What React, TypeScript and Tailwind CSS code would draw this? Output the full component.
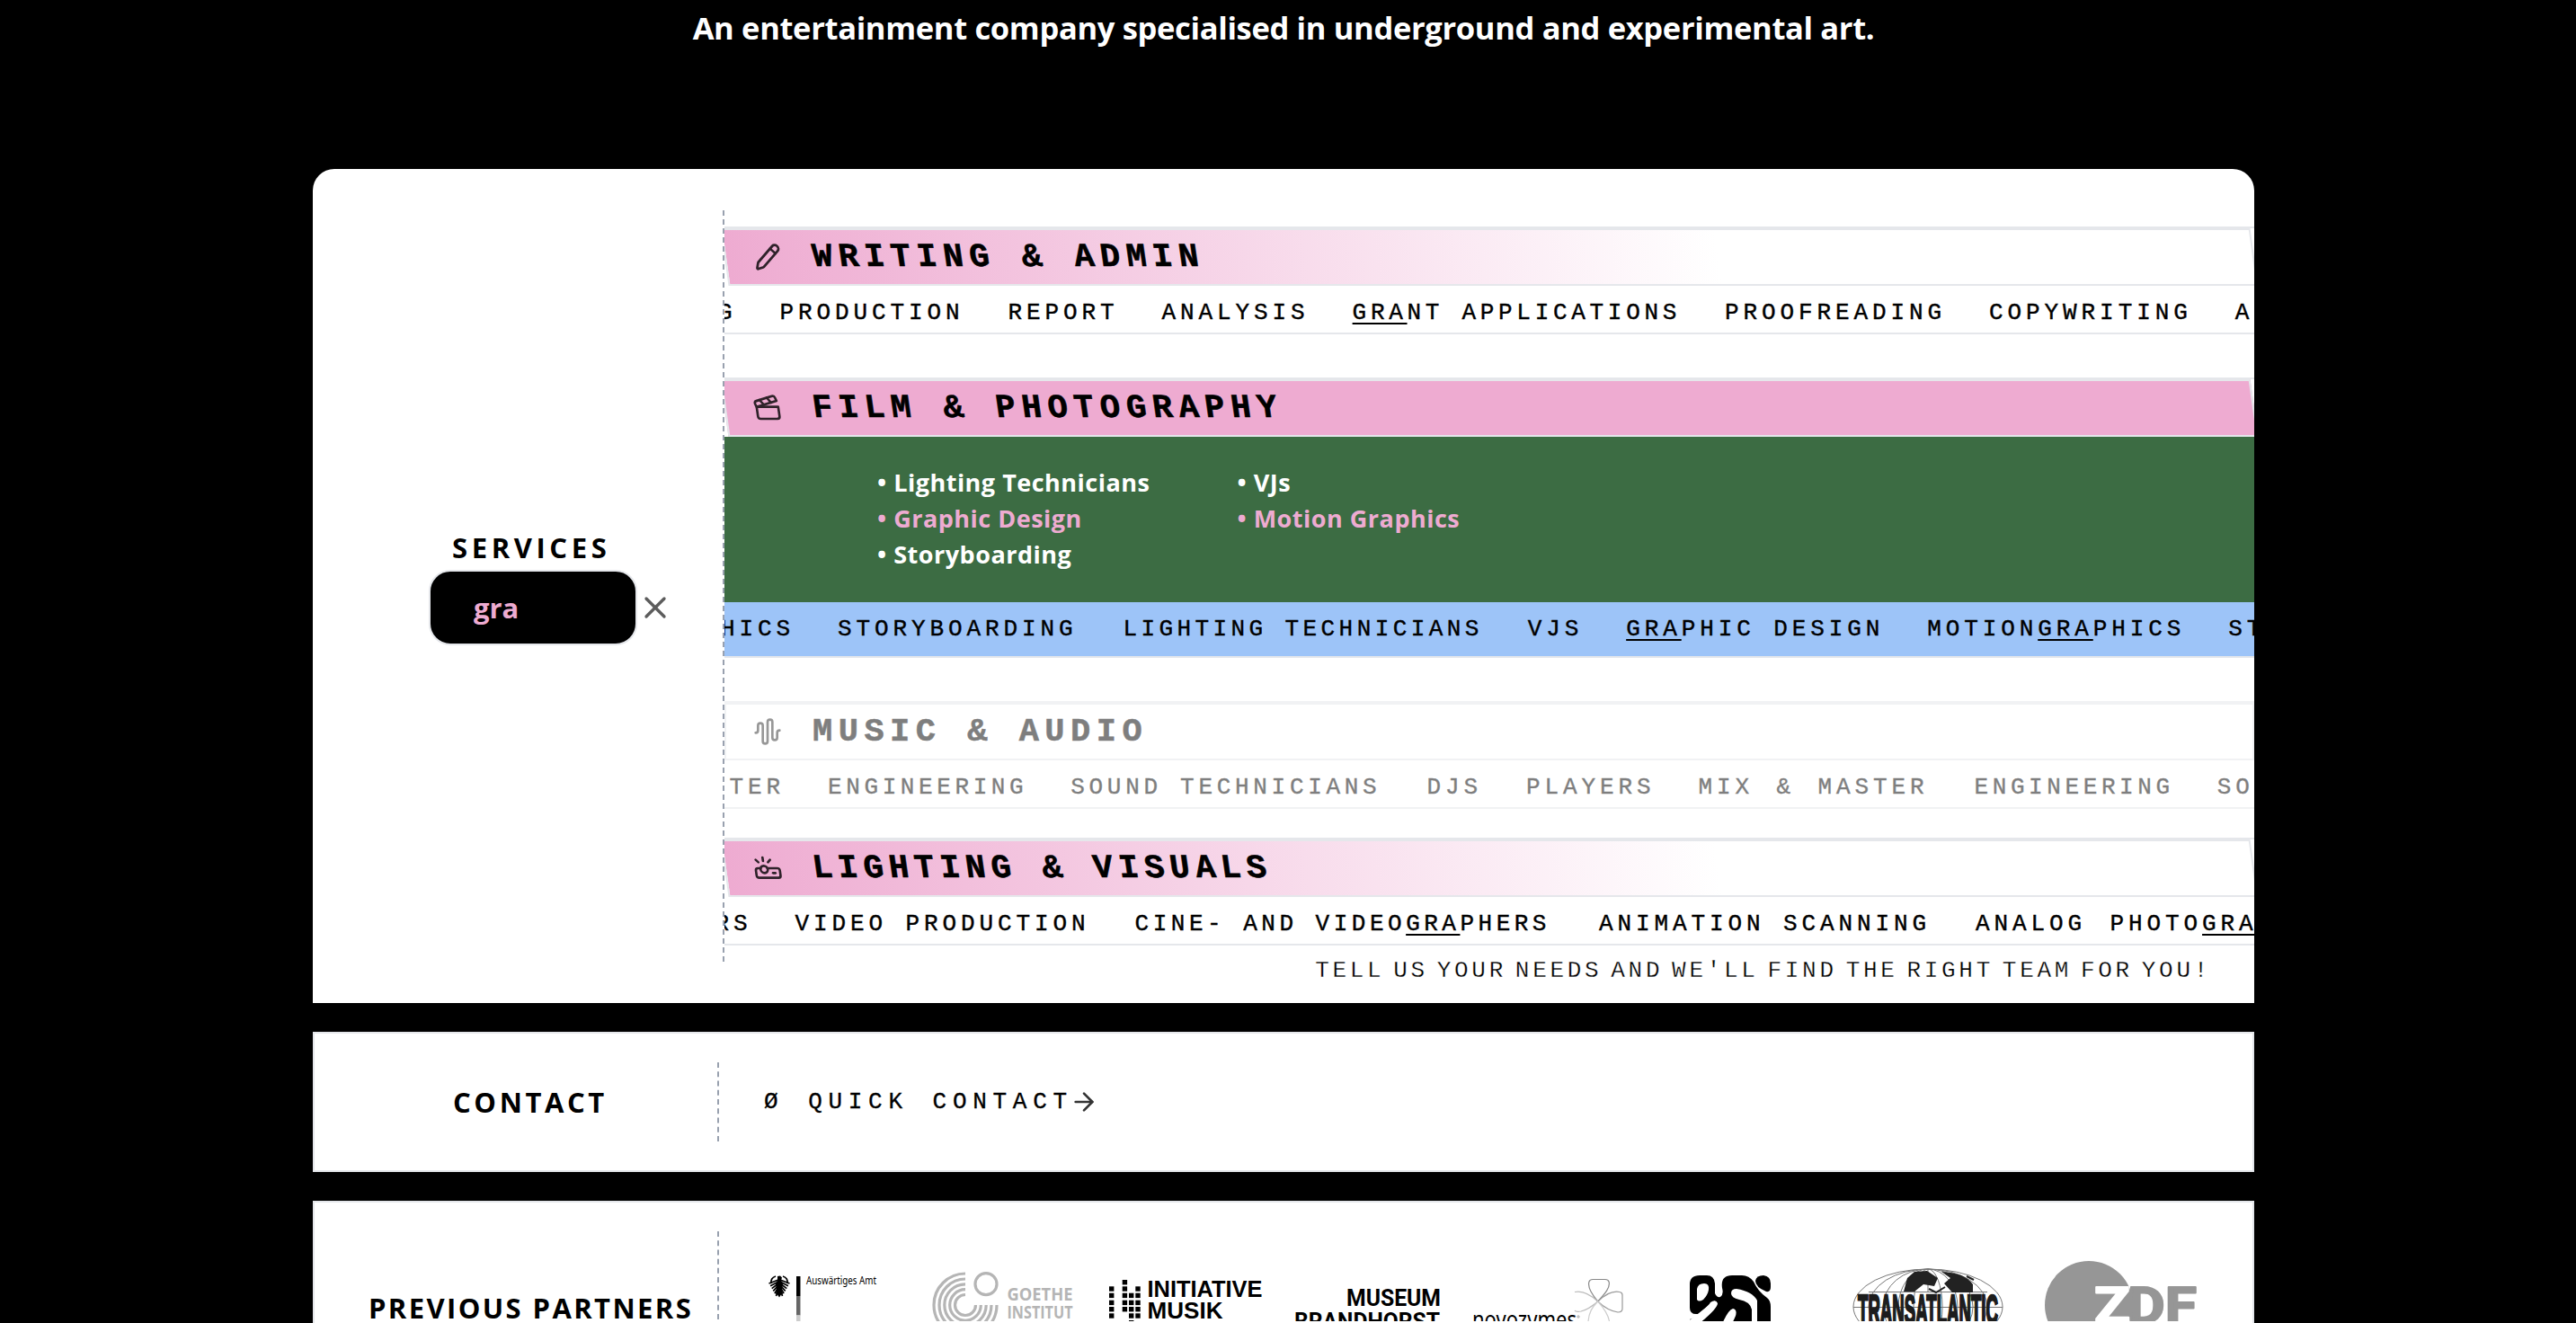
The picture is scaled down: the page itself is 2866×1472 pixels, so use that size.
import React from "react";
import { ArrowRight, AudioWaveform, Clapperboard, Pencil, Projector, X, type LucideIcon } from "lucide-react";

const MONO = "font-['Liberation_Mono',monospace]";

type Item = { text: string; className?: string };

/** Underlines every occurrence of the search query inside a ticker word. */
function Marked({ text }: { text: string }) {
  const parts = text.split("GRA");
  return (
    <>
      {parts.map((part, i) => (
        <React.Fragment key={i}>
          {i > 0 && (
            <span className="underline decoration-2 underline-offset-[4px] [text-decoration-skip-ink:none]">GRA</span>
          )}
          {part}
        </React.Fragment>
      ))}
    </>
  );
}

function Ticker({ items, className }: { items: Item[]; className: string }) {
  return (
    <div className={`flex items-center overflow-hidden border-b-2 border-gray-200 ${className}`}>
      <div
        className={`flex shrink-0 gap-[48px] whitespace-pre text-[26px] leading-[32px] tracking-[4.9px] [-webkit-text-stroke:0.4px_black] ${MONO}`}
      >
        {items.map((item, i) => (
          <span key={i} className={item.className}>
            <Marked text={item.text} />
          </span>
        ))}
      </div>
    </div>
  );
}

function Heading({
  icon: Icon,
  title,
  className,
  titleClass = "tracking-[6.9px]",
}: {
  icon: LucideIcon;
  title: string;
  className: string;
  titleClass?: string;
}) {
  return (
    <div className="overflow-hidden border-t-2 border-gray-200">
      <div className={`flex h-[64px] items-center border-2 border-gray-200 pl-[30px] ${className}`}>
        <Icon size={32} strokeWidth={2} className="opacity-80" />
        <h3
          className={`ml-[34px] whitespace-pre text-[37px] leading-none font-bold [-webkit-text-stroke:0.6px_black] ${titleClass} ${MONO}`}
        >
          {title}
        </h3>
      </div>
    </div>
  );
}

function Logo({ x, width, children }: { x: number; width: number; children: React.ReactNode }) {
  return (
    <svg width={width} height={82} viewBox={`${x} 1390 ${width} 82`} className="shrink-0">
      {children}
    </svg>
  );
}

const squares: [number, number[]][] = [
  [1234, [1433.3, 1440.7, 1448.7, 1456, 1463.3]],
  [1248.7, [1426, 1433.3, 1440.7, 1448.7, 1456]],
  [1256, [1440.7, 1448.7, 1456, 1463.3, 1471]],
  [1263.3, [1433.3, 1440.7, 1448.7, 1456, 1463.3]],
];

function Partners() {
  return (
    <div className="flex pt-[18px] pl-[50px]">
      <Logo x={850} width={180}>
        <g stroke="#000" strokeWidth="1.7" fill="none">
          {[0, 1, 2, 3, 4, 5].map((i) => (
            <path
              key={i}
              d={`M866 ${1426 + i * 2} L${855.5 + i * 1.6} ${1430 + i * 2.8} M868 ${1426 + i * 2} L${878.5 - i * 1.6} ${1430 + i * 2.8}`}
            />
          ))}
          <path d="M858 1430q-1-6 5-8M876 1430q1-6-5-8" />
        </g>
        <path d="M865 1422l3-.5 2 2-1 3 2 4-1 6 1 5-2 1-2 3-2-3-2-1 1-5-1-6 2-4z" />
        <rect x="886" y="1422" width="4.5" height="22" />
        <rect x="886" y="1444" width="4.5" height="21.5" fill="#666" />
        <rect x="886" y="1465.5" width="4.5" height="10" fill="#ccc" />
        <text x="897" y="1431.3" fontFamily="Noto Sans, sans-serif" fontSize="12.5" textLength="78" lengthAdjust="spacingAndGlyphs">
          Auswärtiges Amt
        </text>
      </Logo>
      <Logo x={1030} width={190}>
        <g fill="none" stroke="#b5b5b5" strokeWidth="3.2">
          {[11.5, 17.3, 23.2, 29, 35].map((r) => (
            <path key={r} d={`M1074 ${1454 - r}A${r} ${r} 0 1 0 ${1074 + r} 1454`} />
          ))}
          <circle cx="1097" cy="1430.7" r="12" />
        </g>
        <g fill="#b5b5b5" fontFamily="Open Sans, sans-serif" fontWeight="700" fontSize="20">
          <text x="1120.5" y="1449" textLength="73" lengthAdjust="spacingAndGlyphs">GOETHE</text>
          <text x="1120.5" y="1468.5" textLength="73" lengthAdjust="spacingAndGlyphs">INSTITUT</text>
        </g>
      </Logo>
      <Logo x={1220} width={205}>
        {squares.map(([x, ys]) => ys.map((y) => <rect key={`${x}-${y}`} x={x} y={y} width="5.4" height="5.4" />))}
        <g fontFamily="Liberation Sans, sans-serif" fontWeight="700" fontSize="26.5">
          <text x="1276.5" y="1445" textLength="128" lengthAdjust="spacingAndGlyphs">INITIATIVE</text>
          <text x="1276.5" y="1469" textLength="84" lengthAdjust="spacingAndGlyphs">MUSIK</text>
        </g>
      </Logo>
      <Logo x={1425} width={195}>
        <g fontFamily="Roboto, sans-serif" fontWeight="700" fontSize="26">
          <text x="1498" y="1454.5" textLength="105" lengthAdjust="spacingAndGlyphs">MUSEUM</text>
          <text x="1440" y="1480.5" textLength="162" lengthAdjust="spacingAndGlyphs">BRANDHORST</text>
        </g>
      </Logo>
      <Logo x={1620} width={220}>
        <text x="1638" y="1480" fontFamily="Noto Sans, sans-serif" fontSize="27" textLength="116" lengthAdjust="spacingAndGlyphs">
          novozymes
        </text>
        <circle cx="1756" cy="1467" r="1.2" fill="none" stroke="#777" strokeWidth=".6" />
        <g fill="none" strokeWidth="1.2">
          <path stroke="#888" d="M1777.7 1450C1770 1441 1766 1434 1768 1428Q1769 1425.5 1772 1425.5H1786Q1789 1425.5 1790 1428C1792 1434 1786 1441 1777.7 1450" />
          <path stroke="#999" d="M1777.7 1450C1787 1441 1795 1438 1802 1439.5Q1805 1440 1805 1443V1458Q1805 1462 1800 1462C1792 1461 1785 1457 1777.7 1450" />
          <path stroke="#bbb" d="M1777.7 1450C1768 1441 1759 1438 1752 1439.5M1752 1460Q1753 1462 1759 1461C1767 1459 1772 1455 1777.7 1450" />
          <path stroke="#ccc" d="M1777.7 1450C1771 1457 1768 1462 1767 1472M1777.7 1450C1785 1458 1789 1464 1790.5 1472" />
        </g>
      </Logo>
      <Logo x={1840} width={190}>
        <path d="M1880 1431Q1880 1421 1891 1421H1899Q1907 1421 1908 1430V1441Q1910 1446 1914 1445Q1918 1442 1916 1435Q1914 1421 1927 1421H1938Q1946 1421 1951 1428Q1956 1439 1966 1446Q1970 1449 1970 1456V1475H1880V1470Q1904 1462 1910 1452Q1909 1448 1905 1451L1889 1464Q1880 1465 1880 1457Z" />
        <path d="M1953 1427Q1954 1421 1962 1421Q1970 1422 1970 1430V1434Q1970 1440 1965 1439Q1953 1434 1953 1427Z" />
        <g fill="#fff">
          <path d="M1888 1448V1436Q1889 1430 1896 1430Q1902 1430 1901 1437Q1900 1443 1895 1448Q1890 1451 1888 1448Z" />
          <path d="M1926 1441Q1926 1436 1932 1436Q1950 1439 1955 1449V1475H1949V1459Q1947 1450 1935 1448Q1926 1446 1926 1441Z" />
          <path d="M1916 1475Q1923 1459 1928 1458Q1933 1459 1931 1466L1927 1475Z" />
          <path d="M1878 1472Q1900 1457 1903 1451Q1909 1447 1911 1452Q1911 1458 1890 1475H1878Z" />
        </g>
      </Logo>
      <Logo x={2030} width={220}>
        <g fill="none" stroke="#777" strokeWidth="1">
          {[83, 66, 50, 33, 16].map((rx) => (
            <ellipse key={rx} cx="2145" cy="1456" rx={rx} ry="42" />
          ))}
          <path d="M2079 1439.5H2211M2062 1456.5H2228M2145 1414V1440" />
        </g>
        <path fill="#222" d="M2130 1417L2144 1416L2156 1424L2152 1433L2140 1431L2130 1439H2118L2122 1424ZM2160 1417Q2186 1418 2195 1431V1440H2172L2163 1430L2170 1424Z" />
        <path fill="none" stroke="#222" strokeWidth="2" d="M2127 1422L2121 1436M2146 1436L2154 1440L2164 1434M2188 1422L2196 1426" />
        <text x="2067" y="1475" fill="#1c1c1c" stroke="#1c1c1c" strokeWidth="2.6" fontFamily="Liberation Sans, sans-serif" fontWeight="700" fontSize="46" textLength="156" lengthAdjust="spacingAndGlyphs">
          TRANSATLANTIC
        </text>
      </Logo>
      <Logo x={2250} width={220}>
        <circle cx="2324" cy="1454" r="49" fill="#969696" />
        <g fontFamily="Roboto, sans-serif" fontWeight="700" fontSize="56" strokeWidth="2" strokeLinejoin="round">
          <text x="2330" y="1474" fill="#fff" stroke="#fff" textLength="40" lengthAdjust="spacingAndGlyphs">Z</text>
          <text x="2367" y="1474" fill="#969696" stroke="#969696" textLength="77" lengthAdjust="spacingAndGlyphs">DF</text>
        </g>
      </Logo>
    </div>
  );
}

const writing: Item[] = [
  { text: "COPYWRITING" },
  { text: "PRODUCTION", className: "pr-[1px]" },
  { text: "REPORT" },
  { text: "ANALYSIS" },
  { text: "GRANT APPLICATIONS", className: "tracking-[4.7px] pr-[1px]" },
  { text: "PROOFREADING" },
  { text: "COPYWRITING" },
  { text: "ADMIN" },
];

const film: Item[] = [
  { text: "MOTIONGRAPHICS" },
  { text: "STORYBOARDING", className: "pr-[3px]" },
  { text: "LIGHTING TECHNICIANS", className: "tracking-[4.4px] pr-[2px]" },
  { text: "VJS" },
  { text: "GRAPHIC DESIGN" },
  { text: "MOTIONGRAPHICS" },
  { text: "STORYBOARDING" },
];

const music: Item[] = [
  { text: "MIX & MASTER" },
  { text: "ENGINEERING", className: "tracking-[4.6px]" },
  { text: "SOUND TECHNICIANS", className: "tracking-[4.7px] pr-[3px]" },
  { text: "DJS", className: "pr-[1px]" },
  { text: "PLAYERS" },
  { text: "MIX & MASTER", className: "pr-[3px] [word-spacing:5px]" },
  { text: "ENGINEERING", className: "tracking-[4.6px]" },
  { text: "SOUND TECHNICIANS" },
];

const lighting: Item[] = [
  { text: "PHOTOGRAPHERS" },
  { text: "VIDEO PRODUCTION", className: "pr-[2px]" },
  { text: "CINE- AND VIDEOGRAPHERS", className: "tracking-[4.5px] pr-[6px]" },
  { text: "ANIMATION SCANNING", className: "pr-[2px]" },
  { text: "ANALOG PHOTOGRAPHY", className: "[word-spacing:6px]" },
];

const SIDE_TITLE = "text-[31px] leading-[36px] font-bold";

export default function App() {
  return (
    <div className="h-[1472px] w-[2866px] overflow-hidden bg-black font-['Open_Sans',sans-serif] text-black">
      <div className="flex w-[2856px] flex-col items-center">
        <p className="h-[188px] pt-[7px] text-[34.5px] leading-[48px] font-bold tracking-[-0.33px] whitespace-nowrap text-white">
          An entertainment company specialised in underground and experimental art.
        </p>

        <section className="flex h-[928px] w-[2160px] rounded-t-[24px] bg-white">
          <div className="w-[456px] pt-[403px]">
            <h2 className={`pl-[155px] tracking-[4.6px] ${SIDE_TITLE}`}>SERVICES</h2>
            <div className="mt-[7px] flex items-center pl-[129px]">
              <div className="flex h-[84px] w-[232px] items-center rounded-[24px] border-2 border-gray-200 bg-black pl-[48px] text-[31px] font-bold text-[#eeabd1]">
                gra
              </div>
              <X size={40} strokeWidth={2} className="text-[#5c5c5c]" />
            </div>
          </div>

          <div className="w-[1704px] pt-[46px]">
            <div className="h-[836px] border-l-2 border-dashed border-gray-400 pt-[18px]">
              <div>
                <Heading icon={Pencil} title="WRITING & ADMIN" className="skew-x-[8deg] bg-linear-to-r/srgb from-[#eeabd1] to-white to-65%" />
                <Ticker items={writing} className="h-[54px] pt-[7px] [&>div]:-ml-[212px]" />
              </div>
              <div className="mt-[48px]">
                <Heading icon={Clapperboard} title="FILM & PHOTOGRAPHY" className="skew-x-[8deg] bg-[#eeabd1]" />
                <div className="h-[184px] bg-[#3c6c43] pt-[31px] pl-[170px] text-[27px] leading-[40px] font-bold text-white">
                  <div className="grid w-[801px] grid-cols-2 tracking-[0.5px]">
                    <span>• Lighting Technicians</span>
                    <span>• VJs</span>
                    <span className="text-[#eeabd1]">• Graphic Design</span>
                    <span className="text-[#eeabd1]">• Motion Graphics</span>
                    <span>• Storyboarding</span>
                  </div>
                </div>
                <Ticker items={film} className="h-[62px] bg-[#9dc4f8] [&>div]:-ml-[209px]" />
              </div>
              <div className="mt-[48px] opacity-50">
                <Heading icon={AudioWaveform} title="MUSIC & AUDIO" className="" titleClass="tracking-[6.5px]" />
                <Ticker items={music} className="h-[54px] pt-[7px] [&>div]:-ml-[179px]" />
              </div>
              <div className="mt-[32px]">
                <Heading
                  icon={Projector}
                  title="LIGHTING & VISUALS"
                  className="skew-x-[8deg] bg-linear-to-r/srgb from-[#eeabd1] to-white to-65%"
                  titleClass="tracking-[6.2px]"
                />
                <Ticker items={lighting} className="h-[54px] pt-[7px] [&>div]:-ml-[236px]" />
              </div>
            </div>
            <p
              className={`pr-[48px] text-right text-[26px] leading-[20px] tracking-[3.7px] [-webkit-text-stroke:0.3px_white] [word-spacing:-9.4px] ${MONO}`}
            >
              TELL US YOUR NEEDS AND WE'LL FIND THE RIGHT TEAM FOR YOU!
            </p>
          </div>
        </section>

        <section className="mt-[32px] flex h-[156px] w-[2160px] items-center border-2 border-gray-200 bg-white">
          <h2 className={`w-[448px] pl-[154px] tracking-[3.6px] ${SIDE_TITLE}`}>CONTACT</h2>
          <div className={`flex h-[88px] items-center border-l-2 border-dashed border-gray-400 pl-[50px] text-[26px] whitespace-pre ${MONO}`}>
            <span className="tracking-[6.7px] [-webkit-text-stroke:0.3px_black] [word-spacing:4.6px]">Ø QUICK CONTACT</span>
            <ArrowRight size={32} strokeWidth={2} className="-ml-[4px] text-[#333]" />
          </div>
        </section>

        <section className="mt-[32px] flex h-[240px] w-[2160px] border-2 border-gray-200 bg-white pt-[32px]">
          <h2 className={`w-[448px] pt-[67px] pl-[60px] tracking-[2.4px] whitespace-nowrap ${SIDE_TITLE}`}>PREVIOUS PARTNERS</h2>
          <div className="h-[200px] border-l-2 border-dashed border-gray-400">
            <Partners />
          </div>
        </section>
      </div>
    </div>
  );
}
